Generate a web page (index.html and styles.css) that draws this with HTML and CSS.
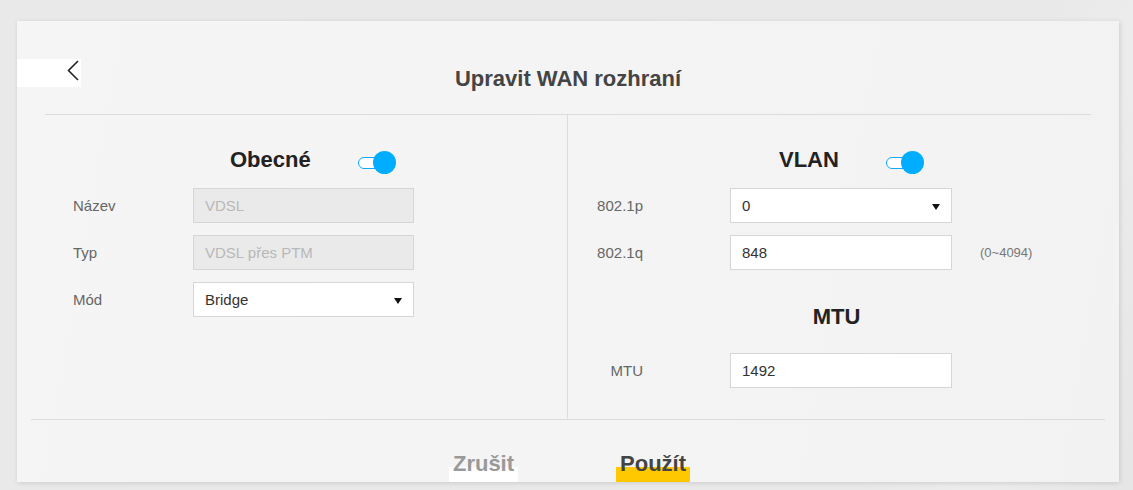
FILE: index.html
```html
<!DOCTYPE html>
<html lang="cs">
<head>
<meta charset="utf-8">
<title>Upravit WAN rozhraní</title>
<link rel="stylesheet" href="styles.css">
</head>
<body>
<div class="page">
  <div class="card">
    <header class="card-head">
      <button class="back" type="button" aria-label="Zpět">
        <svg width="12" height="22" viewBox="0 0 12 22"><polyline points="11,1 1.5,10.5 11,20" fill="none" stroke="#222" stroke-width="1.6"/></svg>
      </button>
      <h1 class="title">Upravit WAN rozhraní</h1>
      <span></span>
    </header>
    <div class="head-line"></div>
    <div class="body">
      <section class="col col-left">
        <div class="sec-head sec-head-left">
          <h2 class="sec-title">Obecné</h2>
          <span class="toggle"><span class="track"></span><span class="knob"></span></span>
        </div>
        <div class="rows">
          <div class="row row-left">
            <label class="lbl lbl-left">Název</label>
            <input class="field" type="text" value="VDSL" disabled>
          </div>
          <div class="row row-left">
            <label class="lbl lbl-left">Typ</label>
            <input class="field" type="text" value="VDSL přes PTM" disabled>
          </div>
          <div class="row row-left">
            <label class="lbl lbl-left">Mód</label>
            <div class="select"><span>Bridge</span><span class="caret"></span></div>
          </div>
        </div>
      </section>
      <section class="col col-right">
        <div class="sec-head sec-head-right">
          <h2 class="sec-title">VLAN</h2>
          <span class="toggle"><span class="track"></span><span class="knob"></span></span>
        </div>
        <div class="rows">
          <div class="row row-right">
            <label class="lbl lbl-right">802.1p</label>
            <div class="select select-wide"><span>0</span><span class="caret"></span></div>
          </div>
          <div class="row row-right">
            <label class="lbl lbl-right">802.1q</label>
            <input class="field field-wide" type="text" value="848">
            <span class="hint">(0~4094)</span>
          </div>
        </div>
        <h2 class="sec-title mtu-title">MTU</h2>
        <div class="rows mtu-rows">
          <div class="row row-right">
            <label class="lbl lbl-right">MTU</label>
            <input class="field field-wide" type="text" value="1492">
          </div>
        </div>
      </section>
    </div>
    <footer class="foot">
      <button class="btn btn-cancel" type="button">Zrušit</button>
      <button class="btn btn-apply" type="button">Použít</button>
    </footer>
  </div>
</div>
</body>
</html>
```
FILE: styles.css
```css
html, body {
  margin: 0;
  padding: 0;
}
body {
  background: linear-gradient(110deg, #e9e9e9 0%, #e9e9e9 80%, #ececec 88%, #e6e6e6 100%);
  font-family: "Liberation Sans", Arial, sans-serif;
  width: 1133px;
  height: 490px;
  overflow: hidden;
}
.page {
  padding: 21px 0 0 17px;
}
.card {
  width: 1102px;
  height: 461px;
  background: linear-gradient(100deg, #f5f5f5 0%, #f4f4f4 50%, #f2f2f2 100%);
  box-shadow: 1px 1px 5px rgba(0, 0, 0, 0.13);
  display: flex;
  flex-direction: column;
  overflow: hidden;
}
.card-head {
  display: grid;
  grid-template-columns: 64px 1fr 64px;
  align-items: start;
  padding-top: 38px;
}
.back {
  width: 64px;
  height: 28px;
  background: #fff;
  border: 0;
  padding: 1px 2px 0 0;
  margin: 0;
  display: flex;
  justify-content: flex-end;
  align-items: flex-start;
  cursor: pointer;
}
.title {
  margin: 8px 0 0;
  font-size: 22px;
  line-height: 24px;
  font-weight: bold;
  color: #444;
  text-align: center;
}
.head-line {
  margin: 23px 28px 0;
  height: 1px;
  background: #dcdcdc;
}
.body {
  margin: 0 14px;
  display: grid;
  grid-template-columns: 1fr 1fr;
  border-bottom: 1px solid #dcdcdc;
}
.col {
  box-sizing: border-box;
  padding-top: 33px;
}
.col-left {
  border-right: 1px solid #dcdcdc;
}
.col-right {
  padding-bottom: 31px;
}
.sec-head {
  display: flex;
  align-items: flex-start;
}
.sec-head-left {
  padding-left: 199px;
}
.sec-head-right {
  padding-left: 211px;
}
.sec-title {
  margin: 0;
  font-size: 22px;
  line-height: 24px;
  font-weight: bold;
  color: #222;
}
.toggle {
  position: relative;
  display: inline-block;
  width: 38px;
  height: 23px;
  margin: 3px 0 0 47px;
}
.track {
  position: absolute;
  left: 0;
  top: 6px;
  width: 28px;
  height: 12px;
  box-sizing: border-box;
  border: 1.5px solid #12a8f5;
  border-radius: 6px;
  background: #fff;
}
.knob {
  position: absolute;
  right: 0;
  top: 0;
  width: 23px;
  height: 23px;
  border-radius: 50%;
  background: #00adff;
}
.rows {
  display: flex;
  flex-direction: column;
  gap: 12px;
  margin-top: 14px;
}
.row {
  display: flex;
  align-items: center;
  height: 35px;
}
.row-left {
  padding-left: 42px;
}
.row-right {
  padding-left: 28px;
}
.lbl {
  font-size: 15px;
  color: #666;
}
.lbl-left {
  width: 120px;
}
.lbl-right {
  width: 47px;
  text-align: right;
  margin-right: 87px;
  white-space: nowrap;
}
.field {
  box-sizing: border-box;
  width: 221px;
  height: 35px;
  margin: 0;
  padding: 0 11px;
  border: 1px solid #d3d6db;
  background: #fff;
  font-family: "Liberation Sans", Arial, sans-serif;
  font-size: 15px;
  color: #333;
  outline: none;
}
.field:disabled {
  background: #eaeaea;
  color: #b8b8b8;
  -webkit-text-fill-color: #b8b8b8;
  opacity: 1;
}
.field-wide {
  width: 222px;
}
.select {
  box-sizing: border-box;
  width: 221px;
  height: 35px;
  padding: 0 11px;
  border: 1px solid #d3d6db;
  background: #fff;
  display: flex;
  align-items: center;
  justify-content: space-between;
  font-size: 15px;
  color: #333;
}
.select-wide {
  width: 222px;
}
.caret {
  width: 0;
  height: 0;
  border-left: 4px solid transparent;
  border-right: 4px solid transparent;
  border-top: 6px solid #111;
  margin-top: 2px;
}
.hint {
  margin-left: 28px;
  font-size: 13px;
  color: #777;
}
.mtu-title {
  margin-top: 35px;
  text-align: center;
}
.mtu-rows {
  margin-top: 24px;
}
.foot {
  flex: 1;
  display: flex;
  justify-content: center;
  align-items: flex-end;
  gap: 98px;
  padding-left: 3px;
}
.btn {
  height: 30px;
  margin: 0;
  border: 0;
  padding: 0 4px;
  font-family: "Liberation Sans", Arial, sans-serif;
  font-size: 22px;
  line-height: 24px;
  font-weight: bold;
  display: flex;
  align-items: flex-start;
  cursor: pointer;
}
.btn-cancel {
  color: #999;
  background: linear-gradient(to bottom, transparent 0, transparent 15px, #fff 15px);
}
.btn-apply {
  color: #444;
  background: linear-gradient(to bottom, transparent 0, transparent 15px, #ffc800 15px);
}
```
